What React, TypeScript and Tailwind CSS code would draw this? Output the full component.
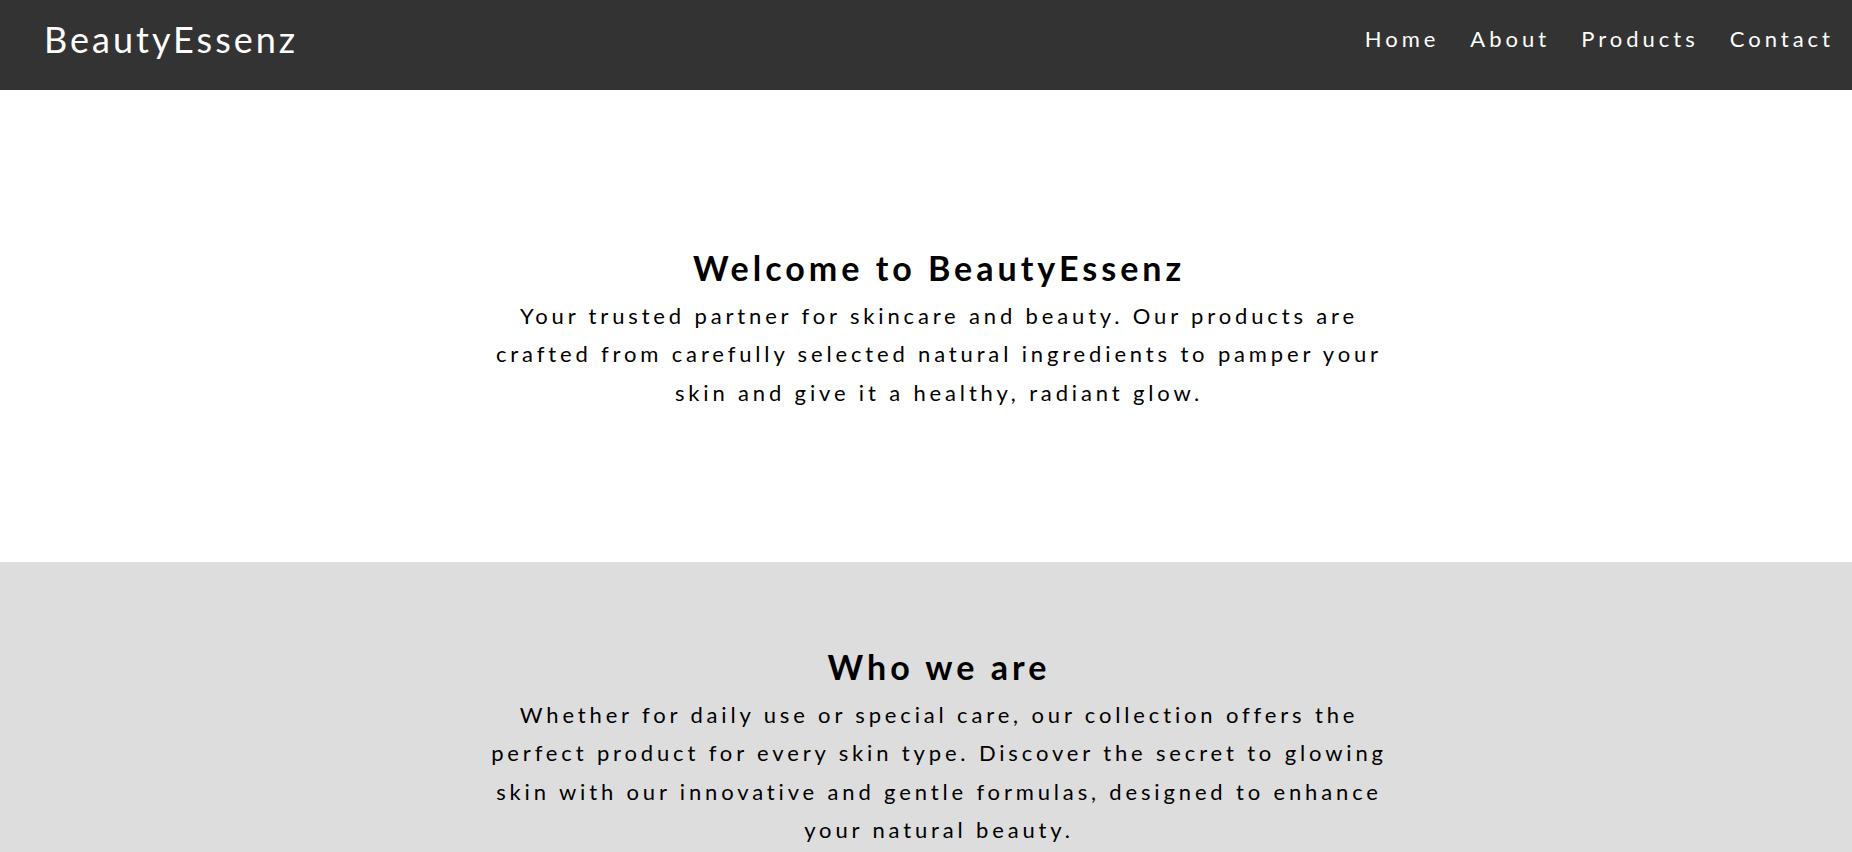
export default function App() {
  const font = { fontFamily: "Lato, 'Noto Sans', sans-serif" };
  return (
    <div className="w-full min-h-screen bg-white" style={font}>
      <header className="h-[90px] bg-[#333333] flex items-center justify-between pl-[44px] pr-[18px] pb-[13px]">
        <div className="text-white text-[36px] tracking-[3px] leading-none">BeautyEssenz</div>
        <nav className="flex gap-[31px] text-white text-[22px] tracking-[4px] leading-none">
          <a>Home</a>
          <a>About</a>
          <a>Products</a>
          <a>Contact</a>
        </nav>
      </header>
      <section className="h-[472px] flex flex-col items-center pt-[158px] pl-[26px] text-center text-black">
        <h1 className="text-[34px] font-bold leading-[1.2] tracking-[4px] mb-[8px]">Welcome to BeautyEssenz</h1>
        <p className="max-w-[900px] text-[22px] leading-[38.5px] tracking-[3.85px]">
          Your trusted partner for skincare and beauty. Our products are crafted from carefully selected natural ingredients to pamper your skin and give it a healthy, radiant glow.
        </p>
      </section>
      <section className="bg-[#dddddd] flex flex-col items-center pt-[85px] pb-[40px] pl-[26px] text-center text-black">
        <h2 className="text-[34px] font-bold leading-[1.2] tracking-[4px] mb-[8px]">Who we are</h2>
        <p className="max-w-[900px] text-[22px] leading-[38.5px] tracking-[3.85px]">
          Whether for daily use or special care, our collection offers the perfect product for every skin type. Discover the secret to glowing skin with our innovative and gentle formulas, designed to enhance your natural beauty.
        </p>
      </section>
    </div>
  );
}
